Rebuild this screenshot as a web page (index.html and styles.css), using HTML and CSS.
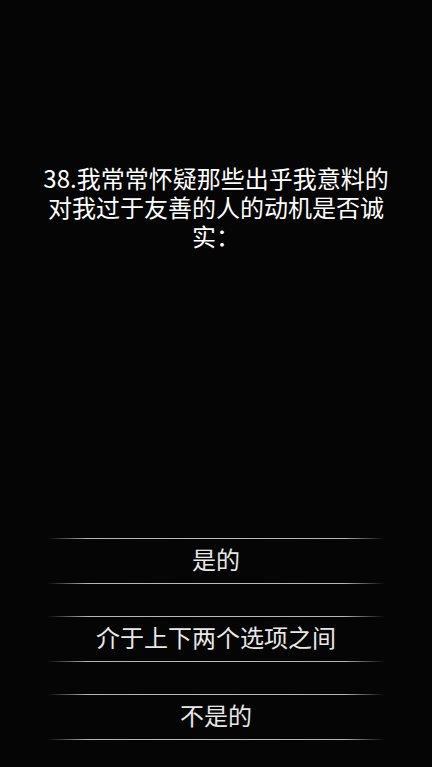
FILE: index.html
```html
<!DOCTYPE html>
<html lang="zh">
<head>
<meta charset="utf-8">
<link rel="stylesheet" href="styles.css">
</head>
<body>
<div class="page">
  <div class="question">38.我常常怀疑那些出乎我意料的对我过于友善的人的动机是否诚实：</div>
  <div class="options">
    <div class="option">是的</div>
    <div class="option">介于上下两个选项之间</div>
    <div class="option">不是的</div>
  </div>
</div>
</body>
</html>
```
FILE: styles.css
```css
html, body {
  margin: 0;
  padding: 0;
  background: #050505;
}
.page {
  width: 432px;
  height: 767px;
  display: flex;
  flex-direction: column;
  align-items: center;
  font-family: "Noto Sans CJK SC", "Noto Sans", sans-serif;
  box-sizing: border-box;
  padding-bottom: 27px;
}
.question {
  margin-top: 163px;
  width: 356px;
  color: #ffffff;
  font-size: 24px;
  line-height: 29px;
  text-align: center;
}
.options {
  margin-top: auto;
  display: flex;
  flex-direction: column;
  gap: 32px;
}
.option {
  position: relative;
  width: 338px;
  height: 46px;
  box-sizing: border-box;
  padding-bottom: 4px;
  display: flex;
  align-items: center;
  justify-content: center;
  color: #e8e8e8;
  font-size: 24px;
  line-height: 28px;
}
.option::before,
.option::after {
  content: "";
  position: absolute;
  left: 0;
  right: 0;
  height: 1px;
  background: linear-gradient(to right, rgba(180,180,180,0) 0%, #b4b4b4 12%, #bcbcbc 50%, #b4b4b4 88%, rgba(180,180,180,0) 100%);
}
.option::before { top: 0; }
.option::after { bottom: 0; }
```
